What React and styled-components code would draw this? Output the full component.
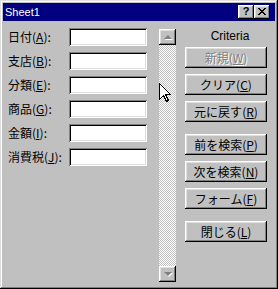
import React from 'react';
import styled, { createGlobalStyle } from 'styled-components';

const GlobalStyle = createGlobalStyle`
    html, body {
        margin: 0;
        padding: 0;
        background: #c0c0c0;
    }
    body {
        font-family: "Noto Sans CJK JP", "Liberation Sans", sans-serif;
    }
`

const raised = `
    box-shadow: inset -1px -1px #000, inset 1px 1px #fff,
        inset -2px -2px #808080, inset 2px 2px #dfdfdf;
`

const Window = styled.div`
    position: relative;
    width: 278px;
    height: 289px;
    box-sizing: border-box;
    padding: 3px;
    background: #c0c0c0;
    box-shadow: inset -1px -1px #000, inset 1px 1px #dfdfdf,
        inset -2px -2px #808080, inset 2px 2px #fff;
    display: flex;
    flex-direction: column;
    overflow: hidden;
`

const TitleBar = styled.div`
    height: 18px;
    flex-shrink: 0;
    background: #000080;
    color: #fff;
    display: flex;
    align-items: center;
    padding: 0 5px 0 2px;
`

const Title = styled.span`
    flex: 1;
    font-family: "Liberation Sans", sans-serif;
    font-size: 11px;
    line-height: 14px;
`

const CaptionButton = styled.div`
    width: 16px;
    height: 14px;
    box-sizing: border-box;
    background: #c0c0c0;
    ${raised}
    display: flex;
    align-items: center;
    justify-content: center;
    color: #000;
    font-family: "Liberation Sans", sans-serif;
    font-weight: bold;
    font-size: 11px;
    line-height: 11px;
    margin-left: ${({$gap}) => $gap || 0}px;
    padding-bottom: 1px;
`

const Body = styled.div`
    flex: 1;
    display: flex;
`

const Fields = styled.div`
    display: flex;
    flex-direction: column;
    gap: 6px;
    padding: 7px 0 0 5px;
`

const Row = styled.div`
    display: flex;
    align-items: center;
    height: 18px;
`

const Label = styled.label`
    width: 61px;
    font-size: 12px;
    line-height: 14px;
    color: #000;
    white-space: nowrap;
`

const Field = styled.input`
    width: 78px;
    height: 18px;
    box-sizing: border-box;
    border: none;
    outline: none;
    margin: 0;
    padding: 2px 3px;
    background: #fff;
    box-shadow: inset 1px 1px #808080, inset -1px -1px #fff,
        inset 2px 2px #000, inset -2px -2px #dfdfdf;
`

const ScrollBar = styled.div`
    width: 17px;
    margin: 8px 0 4px 12px;
    display: flex;
    flex-direction: column;
    justify-content: space-between;
    background-color: #c0c0c0;
    background-image: repeating-conic-gradient(#fff 0% 25%, transparent 0% 50%);
    background-size: 2px 2px;
`

const ScrollButton = styled.div`
    width: 17px;
    height: 16px;
    box-sizing: border-box;
    background: #c0c0c0;
    ${raised}
    display: flex;
    align-items: center;
    justify-content: center;
`

const Arrow = styled.span`
    width: 0;
    height: 0;
    border-left: 4px solid transparent;
    border-right: 4px solid transparent;
    ${({$down}) => $down
        ? 'border-top: 4px solid #808080;'
        : 'border-bottom: 4px solid #808080;'}
    filter: drop-shadow(1px 1px 0 #fff);
`

const Panel = styled.div`
    width: 82px;
    margin-left: 9px;
    padding-top: 8px;
    display: flex;
    flex-direction: column;
`

const Criteria = styled.div`
    height: 14px;
    line-height: 14px;
    margin-bottom: 4px;
    padding-left: 8px;
    text-align: center;
    font-family: "Liberation Sans", sans-serif;
    font-size: 12px;
    color: #000;
`

const Group = styled.div`
    display: flex;
    flex-direction: column;
    gap: 6px;
    margin-bottom: 12px;
`

const Button = styled.div`
    height: 21px;
    box-sizing: border-box;
    background: #c0c0c0;
    ${raised}
    display: flex;
    align-items: center;
    justify-content: center;
    font-size: 12px;
    line-height: 14px;
    color: ${({$disabled}) => $disabled ? '#808080' : '#000'};
    text-shadow: ${({$disabled}) => $disabled ? '1px 1px 0 #fff' : 'none'};
    white-space: nowrap;
`

const Cursor = styled.svg`
    position: absolute;
    left: 159px;
    top: 83px;
`

const fields = [
    ['日付', 'A'],
    ['支店', 'B'],
    ['分類', 'E'],
    ['商品', 'G'],
    ['金額', 'I'],
    ['消費税', 'J'],
]

const groups = [
    [['新規', 'W', true], ['クリア', 'C'], ['元に戻す', 'R']],
    [['前を検索', 'P'], ['次を検索', 'N'], ['フォーム', 'F']],
    [['閉じる', 'L']],
]

const App = () => {
    return (
        <>
            <GlobalStyle />
            <Window>
                <TitleBar>
                    <Title>Sheet1</Title>
                    <CaptionButton>?</CaptionButton>
                    <CaptionButton $gap={0}>
                        <svg width="8" height="7" viewBox="0 0 8 7" shapeRendering="crispEdges">
                            <path d="M0 0h2v1h1v1h2v-1h1v-1h2v1h-1v1h-1v1h-1v1h1v1h1v1h1v1h-2v-1h-1v-1h-2v1h-1v1h-2v-1h1v-1h1v-1h1v-1h-1v-1h-1v-1h-1z" fill="#000" />
                        </svg>
                    </CaptionButton>
                </TitleBar>
                <Body>
                    <Fields>
                        {
                            fields.map(([name, key]) => {
                                return (
                                    <Row key={key}>
                                        <Label>{name}(<u>{key}</u>):</Label>
                                        <Field />
                                    </Row>
                                )
                            })
                        }
                    </Fields>
                    <ScrollBar>
                        <ScrollButton><Arrow /></ScrollButton>
                        <ScrollButton><Arrow $down /></ScrollButton>
                    </ScrollBar>
                    <Panel>
                        <Criteria>Criteria</Criteria>
                        {
                            groups.map((group, i) => {
                                return (
                                    <Group key={i}>
                                        {
                                            group.map(([text, key, disabled]) => {
                                                return (
                                                    <Button key={key} $disabled={disabled}>
                                                        {text}(<u>{key}</u>)
                                                    </Button>
                                                )
                                            })
                                        }
                                    </Group>
                                )
                            })
                        }
                    </Panel>
                </Body>
                <Cursor width="13" height="20" viewBox="0 0 13 20" shapeRendering="crispEdges">
                    <polygon points="0.5,0.5 0.5,16.5 4.5,12.5 7.5,18.5 9.5,17.5 6.5,11.5 11.5,11.5" fill="#fff" stroke="#000" strokeWidth="1" />
                </Cursor>
            </Window>
        </>
    );
};

export default App;
